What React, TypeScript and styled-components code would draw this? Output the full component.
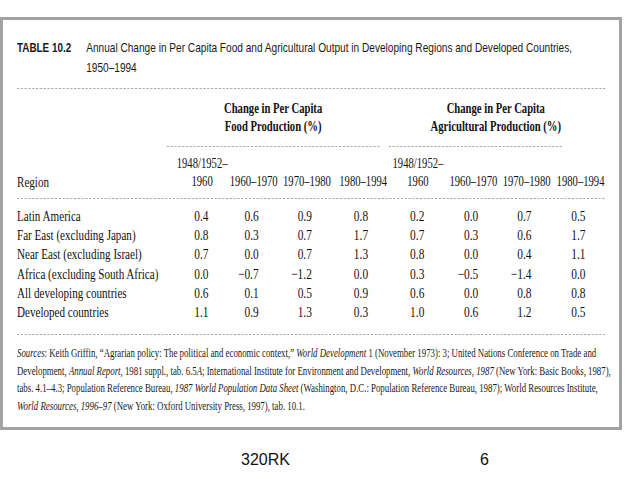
import React from "react";
import styled, { createGlobalStyle } from "styled-components";

const GlobalStyle = createGlobalStyle`
  html, body { margin: 0; padding: 0; background: #ffffff; overflow: hidden; }
  #root { width: 638px; height: 479px; }
`;

const SCALE = 0.76;

const Page = styled.div`
  width: 638px;
  height: 479px;
  box-sizing: border-box;
  padding-top: 17px;
  display: flex;
  flex-direction: column;
`;

const Frame = styled.div`
  flex: none;
  width: 622px;
  height: 413px;
  box-sizing: border-box;
  border: 3px solid #a2a2a2;
  padding: 18px 0 0 14px;
`;

const Viewport = styled.div`
  width: 588px;
`;

const Sheet = styled.div`
  width: 774px;
  transform: scaleX(${SCALE});
  transform-origin: 0 0;
  color: #111;
  font-family: "Liberation Serif", "Times New Roman", serif;
`;

const TitleRow = styled.div`
  display: flex;
  font-family: "Liberation Sans", Arial, sans-serif;
  font-size: 13.3px;
  line-height: 20px;
  color: #1a1a1a;
  white-space: nowrap;
`;

const TitleLabel = styled.div`
  width: 91px;
  flex: none;
  font-weight: 700;
  font-size: 13px;
`;

const TitleText = styled.div``;

const Rule = styled.div<{ $mt: number; $mb: number }>`
  border-top: 1px dashed #a0a0a0;
  margin-top: ${(p) => p.$mt}px;
  margin-bottom: ${(p) => p.$mb}px;
`;

const Table = styled.div`
  display: grid;
  grid-template-columns: 206px 71px 66px 70px 74px 74px 71px 70px 71px;
`;

const Group = styled.div<{ $padR: number; $lineL: number; $lineR: number }>`
  grid-column: span 4;
  display: flex;
  flex-direction: column;
  font-weight: 700;
  font-size: 14px;
  line-height: 18px;
  text-align: center;
  padding-right: ${(p) => p.$padR}px;

  &::after {
    content: "";
    display: block;
    border-top: 1px dashed #a0a0a0;
    margin-top: 9.5px;
    margin-bottom: 8.5px;
    margin-left: ${(p) => p.$lineL}px;
    margin-right: ${(p) => p.$lineR - p.$padR}px;
  }
`;

const HeadLabel = styled.div`
  grid-column: 1;
  align-self: end;
  font-size: 14.6px;
  line-height: 18px;
`;

const HeadCell = styled.div`
  display: flex;
  justify-content: flex-end;
  align-items: flex-end;
  font-size: 14px;
  line-height: 18px;
  white-space: nowrap;
`;

const HeadStack = styled.div`
  text-align: center;
`;

const HeaderRule = styled.div`
  grid-column: 1 / -1;
  border-top: 1px dashed #a0a0a0;
  margin-top: 6.5px;
  margin-bottom: 8.2px;
`;

const Label = styled.div`
  grid-column: 1;
  font-size: 14.6px;
  line-height: 19.3px;
  white-space: nowrap;
`;

const Value = styled.div`
  font-size: 15px;
  line-height: 19.3px;
  text-align: right;
  padding-right: 25px;
`;

const Sources = styled.div`
  font-size: 11.6px;
  line-height: 17.6px;
  white-space: nowrap;
  color: #1a1a1a;
`;

const Footer = styled.div`
  display: flex;
  margin-top: 21px;
  padding-left: 241px;
  font-family: "Liberation Sans", Arial, sans-serif;
  font-size: 16px;
  color: #111;
`;

const PageNo = styled.span`
  margin-left: 190px;
`;

type Row = { region: string; values: string[] };

const rows: Row[] = [
  { region: "Latin America", values: ["0.4", "0.6", "0.9", "0.8", "0.2", "0.0", "0.7", "0.5"] },
  { region: "Far East (excluding Japan)", values: ["0.8", "0.3", "0.7", "1.7", "0.7", "0.3", "0.6", "1.7"] },
  { region: "Near East (excluding Israel)", values: ["0.7", "0.0", "0.7", "1.3", "0.8", "0.0", "0.4", "1.1"] },
  { region: "Africa (excluding South Africa)", values: ["0.0", "\u22120.7", "\u22121.2", "0.0", "0.3", "\u22120.5", "\u22121.4", "0.0"] },
  { region: "All developing countries", values: ["0.6", "0.1", "0.5", "0.9", "0.6", "0.0", "0.8", "0.8"] },
  { region: "Developed countries", values: ["1.1", "0.9", "1.3", "0.3", "1.0", "0.6", "1.2", "0.5"] },
];

const periods = ["1960\u20131970", "1970\u20131980", "1980\u20131994"];

function HeaderGroup() {
  return (
    <>
      <HeadCell>
        <HeadStack>
          1948/1952–
          <br />
          1960
        </HeadStack>
      </HeadCell>
      {periods.map((p) => (
        <HeadCell key={p}>{p}</HeadCell>
      ))}
    </>
  );
}

export default function App() {
  return (
    <>
      <GlobalStyle />
      <Page>
        <Frame>
          <Viewport>
            <Sheet>
              <TitleRow>
                <TitleLabel>TABLE 10.2</TitleLabel>
                <TitleText>
                  Annual Change in Per Capita Food and Agricultural Output in Developing Regions and Developed Countries,
                  <br />
                  1950–1994
                </TitleText>
              </TitleRow>
              <Rule $mt={10} $mb={11} />
              <Table>
                <div />
                <Group $padR={19} $lineL={-9} $lineR={10}>
                  <span>Change in Per Capita</span>
                  <span>Food Production (%)</span>
                </Group>
                <Group $padR={0} $lineL={2} $lineR={56}>
                  <span>Change in Per Capita</span>
                  <span>Agricultural Production (%)</span>
                </Group>
                <HeadLabel>Region</HeadLabel>
                <HeaderGroup />
                <HeaderGroup />
                <HeaderRule />
                {rows.map((r) => (
                  <React.Fragment key={r.region}>
                    <Label>{r.region}</Label>
                    {r.values.map((v, i) => (
                      <Value key={i}>{v}</Value>
                    ))}
                  </React.Fragment>
                ))}
              </Table>
              <Rule $mt={12} $mb={9.5} />
              <Sources>
                <i>Sources</i>: Keith Griffin, “Agrarian policy: The political and economic context,” <i>World Development</i> 1 (November 1973): 3; United Nations Conference on Trade and
                <br />
                Development, <i>Annual Report</i>, 1981 suppl., tab. 6.5<i>A</i>; International Institute for Environment and Development, <i>World Resources, 1987</i> (New York: Basic Books, 1987),
                <br />
                tabs. 4.1–4.3; Population Reference Bureau, <i>1987 World Population Data Sheet</i> (Washington, D.C.: Population Reference Bureau, 1987); World Resources Institute,
                <br />
                <i>World Resources, 1996–97</i> (New York: Oxford University Press, 1997), tab. 10.1.
              </Sources>
            </Sheet>
          </Viewport>
        </Frame>
        <Footer>
          <span>320RK</span>
          <PageNo>6</PageNo>
        </Footer>
      </Page>
    </>
  );
}
